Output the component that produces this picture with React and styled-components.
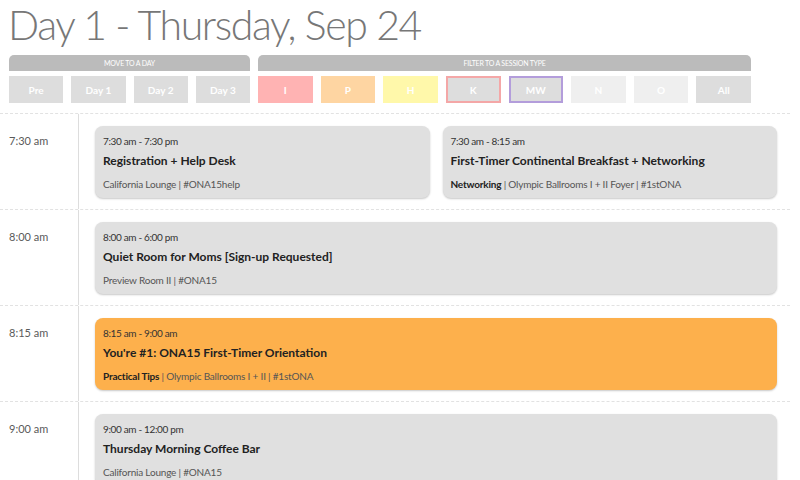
import React from 'react';
import styled, { createGlobalStyle } from 'styled-components';

const GlobalStyle = createGlobalStyle`
  html, body {
    margin: 0;
    padding: 0;
    background: #FFFFFF;
    font-family: "Lato", "Open Sans", sans-serif;
    overflow: hidden;
  }
`

const days = ["Pre", "Day 1", "Day 2", "Day 3"]

const filters = [
  { label: "I", bg: "#FFB3B3" },
  { label: "P", bg: "#FED5A2" },
  { label: "H", bg: "#FFF8AA" },
  { label: "K", bg: "#DDDDDD", border: "#F4A7A7" },
  { label: "MW", bg: "#DDDDDD", border: "#B39DDB" },
  { label: "N", bg: "#EFEFEF" },
  { label: "O", bg: "#EFEFEF" },
  { label: "All", bg: "#DDDDDD" },
]

const slots = [
  {
    time: "7:30 am",
    sessions: [
      { range: "7:30 am - 7:30 pm", title: "Registration + Help Desk", where: "California Lounge | #ONA15help" },
      { range: "7:30 am - 8:15 am", title: "First-Timer Continental Breakfast + Networking", tag: "Networking", where: "Olympic Ballrooms I + II Foyer | #1stONA" },
    ]
  },
  {
    time: "8:00 am",
    sessions: [
      { range: "8:00 am - 6:00 pm", title: "Quiet Room for Moms [Sign-up Requested]", where: "Preview Room II | #ONA15" },
    ]
  },
  {
    time: "8:15 am",
    sessions: [
      { range: "8:15 am - 9:00 am", title: "You're #1: ONA15 First-Timer Orientation", tag: "Practical Tips", where: "Olympic Ballrooms I + II | #1stONA", highlight: true },
    ]
  },
  {
    time: "9:00 am",
    sessions: [
      { range: "9:00 am - 12:00 pm", title: "Thursday Morning Coffee Bar", where: "California Lounge | #ONA15" },
    ]
  },
]

export default function App() {
  return (
    <Page>
      <GlobalStyle />

      <Heading>Day 1 - Thursday, Sep 24</Heading>

      <Controls>
        <Group>
          <GroupLabel>Move to a day</GroupLabel>
          <ButtonRow $count={4}>
            {days.map(day => (
              <ControlButton key={day} $bg="#DDDDDD">{day}</ControlButton>
            ))}
          </ButtonRow>
        </Group>

        <Group>
          <GroupLabel>Filter to a session type</GroupLabel>
          <ButtonRow $count={8}>
            {filters.map(f => (
              <ControlButton key={f.label} $bg={f.bg} $border={f.border}>{f.label}</ControlButton>
            ))}
          </ButtonRow>
        </Group>
      </Controls>

      <Schedule>
        {slots.map(slot => (
          <Slot key={slot.time}>
            <SlotTime>{slot.time}</SlotTime>
            <SlotSessions>
              {slot.sessions.map(s => (
                <Card key={s.title} $highlight={s.highlight}>
                  <CardTime>{s.range}</CardTime>
                  <CardTitle>{s.title}</CardTitle>
                  <CardMeta>
                    {s.tag && <><b>{s.tag}</b> | </>}
                    {s.where}
                  </CardMeta>
                </Card>
              ))}
            </SlotSessions>
          </Slot>
        ))}
      </Schedule>
    </Page>
  )
}

const Page = styled.div`
  width: 800px;
  height: 480px;
  overflow: hidden;
`

const Heading = styled.h1`
  margin: 0;
  padding: 0 0 0 8px;
  height: 55px;

  font-size: 41px;
  line-height: 50px;
  font-weight: 300;
  color: #777777;
  letter-spacing: -1.4px;
`

const Controls = styled.div`
  display: grid;
  grid-template-columns: 241px 493px;
  gap: 8px;

  padding-left: 9px;
  padding-bottom: 10px;
`

const Group = styled.div`
  display: flex;
  flex-direction: column;
  gap: 5px;
`

const GroupLabel = styled.div`
  height: 16px;
  border-radius: 5px 5px 0 0;

  background: #BBBBBB;

  font-size: 7px;
  line-height: 16px;
  text-transform: uppercase;
  text-align: center;
  letter-spacing: -0.2px;
  color: #FFFFFF;
`

const ButtonRow = styled.div`
  display: grid;
  grid-template-columns: repeat(${p => p.$count}, 1fr);
  gap: 8px;
`

const ControlButton = styled.button`
  height: 27px;
  padding: 0;
  box-sizing: border-box;

  background: ${p => p.$bg};
  border: ${p => p.$border ? `2px solid ${p.$border}` : "none"};

  font-family: "Lato", sans-serif;
  font-size: 10px;
  font-weight: bold;
  color: #FFFFFF;
`

const Schedule = styled.div`
  width: 790px;
  border-top: 1px dashed #E2E2E2;
`

const Slot = styled.div`
  display: grid;
  grid-template-columns: 79px 1fr;

  border-bottom: 1px dashed #E2E2E2;
`

const SlotTime = styled.div`
  padding: 20px 0 0 9px;
  border-right: 1px solid #DDDDDD;

  font-size: 11px;
  line-height: 14px;
  color: #5A5A5A;
`

const SlotSessions = styled.div`
  display: flex;
  gap: 13px;

  padding: 12px 13px 11px 16px;
`

const Card = styled.div`
  flex: 1;
  height: 72px;
  box-sizing: border-box;
  padding: 7px 8px 6px;
  border-radius: 8px;

  background: ${p => p.$highlight ? "#FDB04C" : "#E0E0E0"};
  box-shadow: 0 1px 2px rgba(0, 0, 0, 0.22);
`

const CardTime = styled.div`
  font-size: 10px;
  line-height: 16px;
  letter-spacing: -0.35px;
  color: #333333;
`

const CardTitle = styled.div`
  margin-top: 3px;

  font-size: 12px;
  line-height: 18px;
  font-weight: bold;
  color: #222222;
`

const CardMeta = styled.div`
  margin-top: 6px;

  font-size: 10px;
  line-height: 16px;
  letter-spacing: -0.2px;
  color: #555555;

  b {
    color: #222222;
  }
`
